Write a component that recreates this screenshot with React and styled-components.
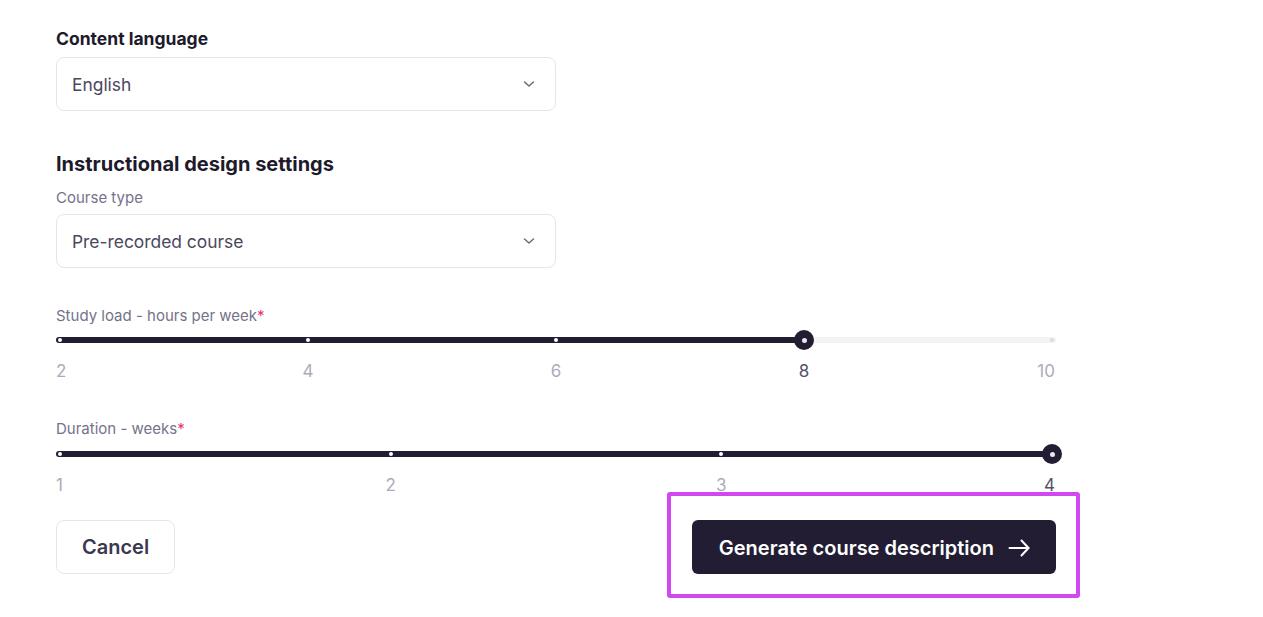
import React from "react";
import styled, { createGlobalStyle } from "styled-components";

const GlobalStyle = createGlobalStyle`
  body {
    margin: 0;
    background: #ffffff;
    font-family: Inter, "Noto Sans", "Liberation Sans", sans-serif;
    color: #221d33;
  }
`;

const Page = styled.div`
  padding: 28px 0 40px 56px;
  width: 1000px;
`;

const FieldLabel = styled.div`
  font-size: 17.5px;
  line-height: 22px;
  font-weight: 700;
  color: #1d1a2b;
  margin-bottom: 7px;
`;

const Heading = styled.h2`
  margin: 40px 0 11px;
  font-size: 20px;
  line-height: 26px;
  font-weight: 700;
  color: #1d1a2b;
`;

const SmallLabel = styled.div`
  font-size: 15px;
  line-height: 20px;
  color: #75728a;
  margin-top: ${(p) => p.$top || 0}px;
  margin-bottom: ${(p) => p.$bottom || 6}px;
`;

const Star = styled.span`
  color: #e8336b;
`;

const SelectBox = styled.div`
  width: 500px;
  height: 54px;
  box-sizing: border-box;
  border: 1px solid #e6e5eb;
  border-radius: 8px;
  display: flex;
  align-items: center;
  justify-content: space-between;
  padding: 0 20px 0 15px;
  font-size: 17.4px;
  color: #4b485e;
`;

const SliderRoot = styled.div`
  position: relative;
  height: 20px;
  display: flex;
  align-items: center;
`;

const Track = styled.div`
  position: relative;
  width: 100%;
  height: 6px;
  border-radius: 3px;
  background: #f3f3f5;
`;

const Fill = styled.div`
  position: absolute;
  left: 0;
  top: 0;
  bottom: 0;
  border-radius: 3px;
  background: #221d33;
`;

const Tick = styled.span`
  position: absolute;
  top: 1px;
  width: 4px;
  height: 4px;
  margin-left: -2px;
  border-radius: 50%;
  background: ${(p) => (p.$on ? "#ffffff" : "#dcdce2")};
`;

const Thumb = styled.span`
  position: absolute;
  top: 50%;
  width: 20px;
  height: 20px;
  margin: -10px 0 0 -10px;
  border-radius: 50%;
  background: #221d33;
  display: flex;
  align-items: center;
  justify-content: center;

  &::after {
    content: "";
    width: 5px;
    height: 5px;
    border-radius: 50%;
    background: #e9e8ee;
  }
`;

const MarkRow = styled.div`
  position: relative;
  height: 22px;
  margin-top: 10px;
  font-size: 17px;
  line-height: 22px;
`;

const Mark = styled.span`
  position: absolute;
  top: 0;
  color: ${(p) => (p.$active ? "#55526a" : "#adabb9")};
  transform: ${(p) =>
    p.$edge === "start" ? "none" : p.$edge === "end" ? "translateX(-100%)" : "translateX(-50%)"};
`;

const Actions = styled.div`
  display: flex;
  justify-content: space-between;
  align-items: center;
  margin-top: 24px;
`;

const GhostButton = styled.button`
  height: 54px;
  padding: 0 25px;
  border: 1px solid #e6e5eb;
  border-radius: 8px;
  background: #ffffff;
  font-family: inherit;
  font-size: 20px;
  font-weight: 600;
  color: #3b3850;
`;

const Highlight = styled.div`
  position: relative;

  &::after {
    content: "";
    position: absolute;
    top: -28px;
    left: -25px;
    right: -24px;
    bottom: -24px;
    border: 4px solid #d148f0;
    border-radius: 3px;
    pointer-events: none;
  }
`;

const PrimaryButton = styled.button`
  height: 54px;
  padding: 1px 25px 0 27px;
  border: none;
  border-radius: 6px;
  background: #221d33;
  color: #ffffff;
  font-family: inherit;
  font-size: 20px;
  font-weight: 600;
  display: flex;
  align-items: center;
  gap: 13px;
`;

const Chevron = () => (
  <svg width="12" height="12" viewBox="0 0 12 12" fill="none">
    <path d="M1.5 4l4.5 4 4.5-4" stroke="#6b6880" strokeWidth="1.5" strokeLinecap="round" strokeLinejoin="round" />
  </svg>
);

const Arrow = () => (
  <svg width="24" height="24" viewBox="0 0 24 24" fill="none" stroke="#ffffff" strokeWidth="2" strokeLinecap="round" strokeLinejoin="round">
    <path d="M2.5 12h19" />
    <path d="M14.5 4.5l7 7.5-7 7.5" />
  </svg>
);

const INSET = 4;

const Slider = ({ marks, value }) => {
  const min = marks[0];
  const max = marks[marks.length - 1];
  const pos = (v) => `calc(${INSET}px + (100% - ${INSET * 2}px) * ${(v - min) / (max - min)})`;
  return (
    <>
      <SliderRoot>
        <Track>
          <Fill style={{ width: pos(value) }} />
          {marks.map((m) => (
            <Tick key={m} $on={m <= value} style={{ left: pos(m) }} />
          ))}
          <Thumb style={{ left: pos(value) }} />
        </Track>
      </SliderRoot>
      <MarkRow>
        {marks.map((m, i) => (
          <Mark
            key={m}
            $active={m === value}
            $edge={i === 0 ? "start" : i === marks.length - 1 ? "end" : "mid"}
            style={{ left: i === 0 ? 0 : i === marks.length - 1 ? "calc(100% - 1px)" : pos(m) }}
          >
            {m}
          </Mark>
        ))}
      </MarkRow>
    </>
  );
};

export default function App() {
  return (
    <Page>
      <GlobalStyle />
      <FieldLabel>Content language</FieldLabel>
      <SelectBox>
        English
        <Chevron />
      </SelectBox>

      <Heading>Instructional design settings</Heading>
      <SmallLabel>Course type</SmallLabel>
      <SelectBox>
        Pre-recorded course
        <Chevron />
      </SelectBox>

      <SmallLabel $top={38} $bottom={4}>
        Study load - hours per week<Star>*</Star>
      </SmallLabel>
      <Slider marks={[2, 4, 6, 8, 10]} value={8} />

      <SmallLabel $top={37} $bottom={5}>
        Duration - weeks<Star>*</Star>
      </SmallLabel>
      <Slider marks={[1, 2, 3, 4]} value={4} />

      <Actions>
        <GhostButton>Cancel</GhostButton>
        <Highlight>
          <PrimaryButton>
            Generate course description
            <Arrow />
          </PrimaryButton>
        </Highlight>
      </Actions>
    </Page>
  );
}
